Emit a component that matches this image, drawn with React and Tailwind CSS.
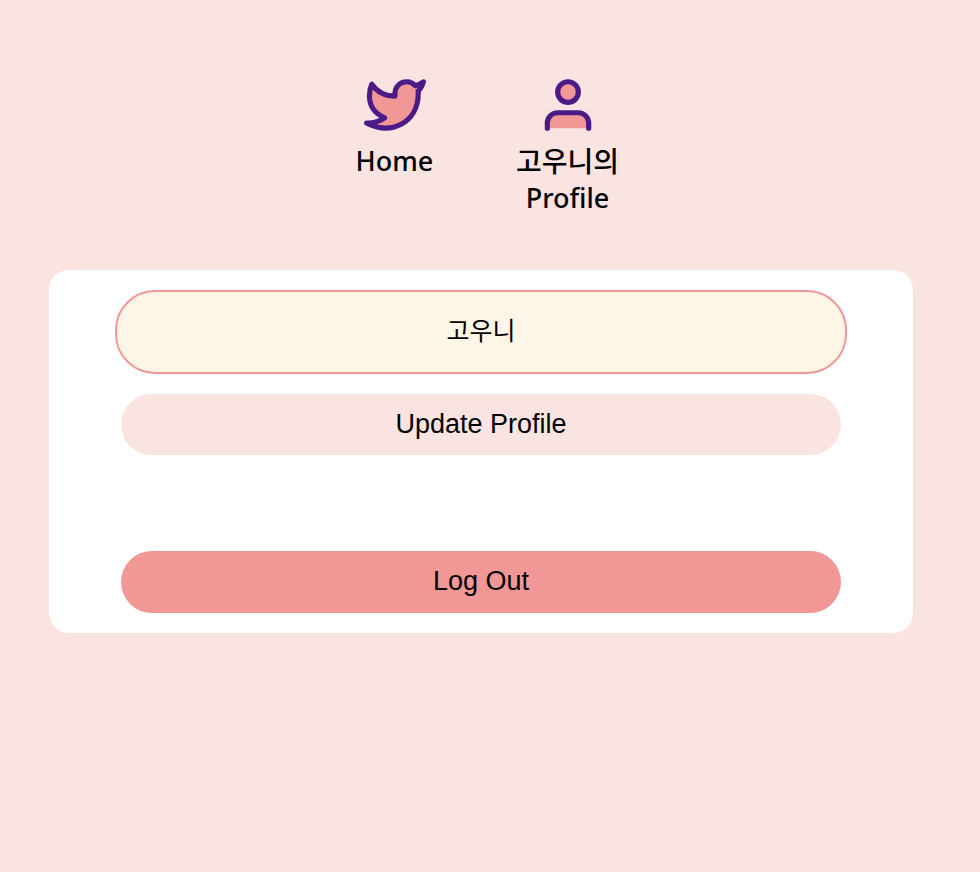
import { useState } from "react";

const navLink =
  "flex w-[122px] flex-col items-center gap-[7px] text-center text-[27px] leading-9 font-medium text-black";
const pill =
  "w-full cursor-pointer rounded-full pb-[2px] text-[27px] leading-8 text-black";

function Icon({ children }) {
  return (
    <svg
      width="62"
      height="62"
      viewBox="0 0 24 24"
      fill="#f19896"
      stroke="#4c1a87"
      strokeWidth="2"
      strokeLinecap="round"
      strokeLinejoin="round"
      aria-hidden="true"
    >
      {children}
    </svg>
  );
}

export default function App() {
  const [name, setName] = useState("고우니");

  return (
    <div className="min-h-screen bg-[#f9e4e1] pr-[18px] font-['Liberation_Sans','Noto_Sans_CJK_KR',sans-serif] text-black">
      <nav className="flex justify-center gap-[51px] pt-[74px] font-['Noto_Sans','Noto_Sans_CJK_KR',sans-serif]">
        <a href="#home" className={navLink}>
          <Icon>
            <path d="M23 3a10.9 10.9 0 0 1-3.14 1.53 4.48 4.48 0 0 0-7.86 3v1A10.66 10.66 0 0 1 3 4s-4 9 5 13a11.64 11.64 0 0 1-7 2c9 5 20 0 20-11.5a4.5 4.5 0 0 0-.08-.83A7.72 7.72 0 0 0 23 3z" />
          </Icon>
          <span>Home</span>
        </a>
        <a href="#profile" className={navLink}>
          <Icon>
            <path d="M20 21v-2a4 4 0 0 0-4-4H8a4 4 0 0 0-4 4v2" />
            <circle cx="12" cy="7" r="4" />
          </Icon>
          <span>
            <span className="text-[28px] leading-9">고우니의</span> Profile
          </span>
        </a>
      </nav>

      <main className="mx-[49px] mt-[54px] rounded-[20px] bg-white px-[66px] py-5">
        <form onSubmit={(e) => e.preventDefault()}>
          <input
            type="text"
            aria-label="Display name"
            value={name}
            onChange={(e) => setName(e.target.value)}
            className="block h-[84px] w-full rounded-[40px] border-2 border-[#f19896] bg-[#fdf5e6] pb-[6px] text-center text-[25px] outline-none"
          />
          <div className="mt-5 px-[6px]">
            <button type="submit" className={`${pill} h-[61px] bg-[#f9e4e1]`}>
              Update Profile
            </button>
          </div>
        </form>
        <div className="mt-24 px-[6px]">
          <button type="button" className={`${pill} h-[62px] bg-[#f19896]`}>
            Log Out
          </button>
        </div>
      </main>
    </div>
  );
}
